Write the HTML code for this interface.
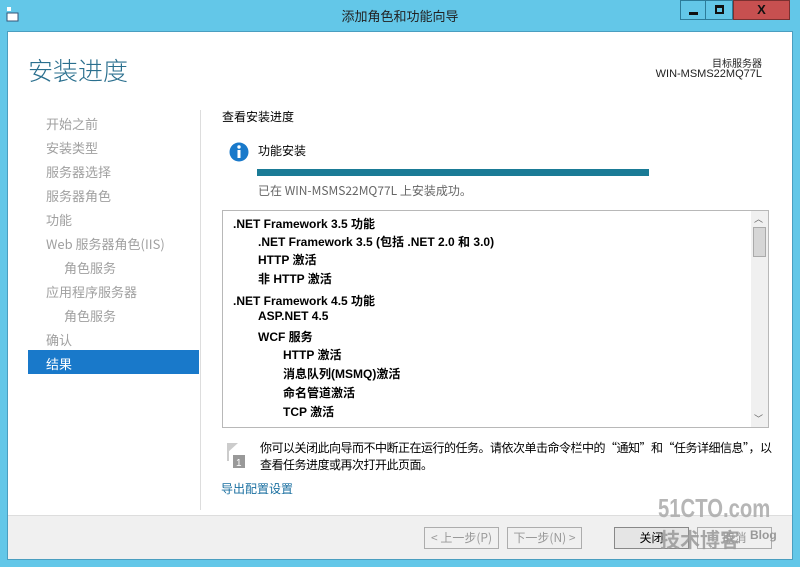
<!DOCTYPE html>
<html><head><meta charset="utf-8"><style>
*{margin:0;padding:0;box-sizing:border-box}
body{width:800px;height:567px;background:#63c7e8;font-family:"Liberation Sans","Noto Sans CJK SC",sans-serif;position:relative;overflow:hidden;font-size:12px;color:#000}
.abs{position:absolute}
.cjk{font-family:"Noto Sans CJK SC","Liberation Sans",sans-serif}
#main{left:7px;top:31px;width:786px;height:529px;background:#fff;border:1px solid #4a9ec0}
.nav{left:46px;color:#a0a0a0;font-size:13px}
.li{position:absolute;font-weight:bold;font-size:12px;white-space:nowrap}
.btn{position:absolute;top:527px;height:22px;border:1px solid #adadad;background:#f0f0f0;font-size:12px;text-align:center;line-height:20px;color:#999}
</style></head><body>
<div class="abs" style="left:6px;top:6px;width:12px;height:16px">
<svg width="14" height="18"><rect x="1" y="1" width="4" height="4" fill="#fff"/><rect x="1" y="7" width="11" height="8" fill="#fff" stroke="#357" stroke-width="1"/></svg></div>
<div class="abs cjk" style="left:0;width:800px;top:6px;text-align:center;font-size:13px;color:#222">添加角色和功能向导</div>
<div class="abs" style="left:680px;top:0;width:26px;height:20px;border:1px solid #2c7c9a;background:#63c7e8"><div style="margin:11px 8px 0;width:9px;height:3px;background:#111"></div></div>
<div class="abs" style="left:705px;top:0;width:28px;height:20px;border:1px solid #2c7c9a;background:#63c7e8"><div style="margin:4px 9px;width:9px;height:9px;border:2px solid #111;border-top-width:3px"></div></div>
<div class="abs" style="left:733px;top:0;width:57px;height:20px;background:#c75050;border:1px solid #7a3030;color:#111;font-weight:bold;font-size:13px;text-align:center;line-height:18px">X</div>
<div id="main" class="abs"></div>
<div class="abs cjk" style="left:28px;top:52px;font-size:25px;color:#2a6f8e;font-weight:300">安装进度</div>
<div class="abs cjk" style="right:38px;top:55px;font-size:10px;color:#222">目标服务器</div>
<div class="abs" style="right:38px;top:68px;font-size:11px;color:#222">WIN-MSMS22MQ77L</div>
<div class="abs nav cjk" style="top:114px">开始之前</div>
<div class="abs nav cjk" style="top:138px">安装类型</div>
<div class="abs nav cjk" style="top:162px">服务器选择</div>
<div class="abs nav cjk" style="top:186px">服务器角色</div>
<div class="abs nav cjk" style="top:210px">功能</div>
<div class="abs nav cjk" style="top:234px">Web 服务器角色(IIS)</div>
<div class="abs nav cjk" style="top:258px;left:64px">角色服务</div>
<div class="abs nav cjk" style="top:282px">应用程序服务器</div>
<div class="abs nav cjk" style="top:306px;left:64px">角色服务</div>
<div class="abs nav cjk" style="top:330px">确认</div>
<div class="abs cjk" style="left:28px;top:350px;width:171px;height:24px;background:#1979ca;color:#fff;font-size:13px;padding:4px 18px">结果</div>
<div class="abs" style="left:200px;top:110px;width:1px;height:400px;background:#ddd"></div>
<div class="abs cjk" style="left:222px;top:108px;font-size:12px">查看安装进度</div>
<svg class="abs" style="left:229px;top:142px" width="20" height="20"><circle cx="10" cy="10" r="9.5" fill="#1979ca"/><rect x="8.5" y="8" width="3" height="8" fill="#fff"/><circle cx="10" cy="5" r="1.7" fill="#fff"/></svg>
<div class="abs cjk" style="left:258px;top:142px;font-size:12px">功能安装</div>
<div class="abs" style="left:257px;top:169px;width:392px;height:7px;background:#1a7b96"></div>
<div class="abs cjk" style="left:258px;top:182px;font-size:12px;color:#666">已在 WIN-MSMS22MQ77L 上安装成功。</div>
<div class="abs" style="left:222px;top:210px;width:547px;height:218px;border:1px solid #b8b8b8"></div>
<div class="abs" style="left:751px;top:211px;width:17px;height:216px;background:#f0f0f0"></div>
<div class="abs" style="left:753px;top:227px;width:13px;height:30px;background:#d6d6d6;border:1px solid #aaa"></div>
<div class="abs" style="left:754px;top:212px;font-size:9px;color:#666">︿</div>
<div class="abs" style="left:754px;top:412px;font-size:9px;color:#666">﹀</div>
<div class="li" style="left:233px;top:215px">.NET Framework 3.5 功能</div>
<div class="li" style="left:258px;top:233px">.NET Framework 3.5 (包括 .NET 2.0 和 3.0)</div>
<div class="li" style="left:258px;top:251px">HTTP 激活</div>
<div class="li" style="left:258px;top:270px">非 HTTP 激活</div>
<div class="li" style="left:233px;top:292px">.NET Framework 4.5 功能</div>
<div class="li" style="left:258px;top:309px">ASP.NET 4.5</div>
<div class="li" style="left:258px;top:328px">WCF 服务</div>
<div class="li" style="left:283px;top:346px">HTTP 激活</div>
<div class="li" style="left:283px;top:365px">消息队列(MSMQ)激活</div>
<div class="li" style="left:283px;top:384px">命名管道激活</div>
<div class="li" style="left:283px;top:403px">TCP 激活</div>
<svg class="abs" style="left:224px;top:441px" width="24" height="28"><path d="M3 2 L14 2 L3 12 Z" fill="#ccc"/><rect x="3" y="2" width="2" height="18" fill="#ccc"/><rect x="9" y="14" width="12" height="13" fill="#999"/><text x="12" y="25" font-size="10" fill="#fff" font-family="Liberation Sans">1</text></svg>
<div class="abs cjk" style="left:260px;top:439px;font-size:12px;line-height:17px;white-space:nowrap;letter-spacing:-0.5px">你可以关闭此向导而不中断正在运行的任务。请依次单击命令栏中的“通知”和“任务详细信息”，以<br>查看任务进度或再次打开此页面。</div>
<div class="abs cjk" style="left:221px;top:480px;font-size:12px;color:#1a6fa0">导出配置设置</div>
<div class="abs" style="left:8px;top:515px;width:784px;height:44px;background:#f0f0f0;border-top:1px solid #ddd"></div>
<div class="btn cjk" style="left:424px;width:75px">&lt; 上一步(P)</div>
<div class="btn cjk" style="left:507px;width:75px">下一步(N) &gt;</div>
<div class="btn cjk" style="left:614px;width:75px;color:#000;border-color:#888;background:#e5e5e5">关闭</div>
<div class="btn cjk" style="left:697px;width:75px">取消</div>
<div class="abs" style="left:658px;top:493px;font-size:26px;font-weight:bold;color:#aaa;opacity:.85;transform:scaleX(0.78);transform-origin:left top;white-space:nowrap">51CTO.com</div>
<div class="abs cjk" style="left:660px;top:524px;font-size:20px;font-weight:bold;color:#999;opacity:.85">技术博客</div>
<div class="abs" style="left:750px;top:528px;font-size:12px;font-weight:bold;color:#999">Blog</div>
</body></html>
